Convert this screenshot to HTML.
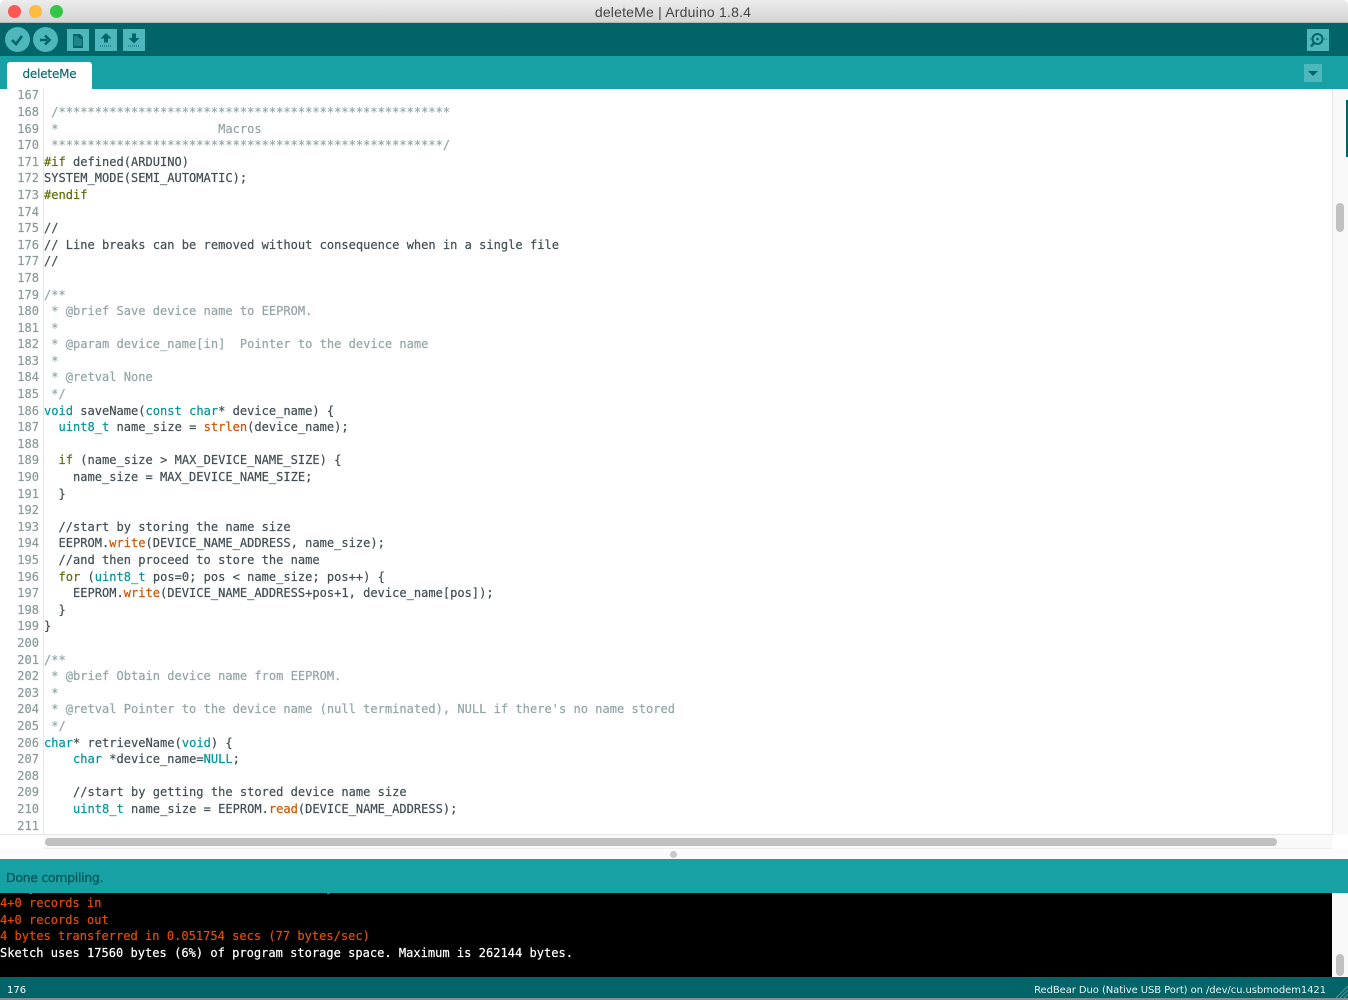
<!DOCTYPE html>
<html><head><meta charset="utf-8"><style>
html,body{margin:0;padding:0;width:1348px;height:1000px;overflow:hidden;background:#fff}
*{box-sizing:border-box}
.a{position:absolute}
#code,#nums,#con{font-family:"DejaVu Sans Mono","Liberation Mono",monospace;font-size:12.05px;line-height:16.6px;white-space:pre;position:absolute;margin:0;-webkit-text-stroke:.2px}
#nums{left:0;width:39px;top:87.4px;text-align:right;color:#8b9a9a}
#code{left:44px;top:87.4px;color:#434f54}
.c{color:#95a5a6}.k{color:#00979d}.f{color:#d35400}.p{color:#5e6d03}
#con{left:0;top:895px;color:#fff}
#con .o{color:#e34c00}
.btn{position:absolute;background:#4db7bb;width:22px;height:22px;top:29px}
.r{position:absolute;border-radius:50%;background:#4db7bb;width:25px;height:25px;top:27px}
</style></head><body>
<div class="a" style="left:0;top:0;width:1348px;height:23px;background:linear-gradient(#ececec,#d4d4d4);border-bottom:1px solid #b5b5b5;border-radius:5px 5px 0 0"></div>
<div class="a" style="left:0;top:3px;width:1346px;text-align:center;font:14px/18px 'Liberation Sans',sans-serif;color:#444;letter-spacing:.2px">deleteMe | Arduino 1.8.4</div>
<div class="a" style="left:8px;top:5px;width:13px;height:13px;border-radius:50%;background:#fc5753"></div>
<div class="a" style="left:29px;top:5px;width:13px;height:13px;border-radius:50%;background:#fdbc40"></div>
<div class="a" style="left:50px;top:5px;width:13px;height:13px;border-radius:50%;background:#33c748"></div>

<div class="a" style="left:0;top:23px;width:1348px;height:33px;background:#006468"></div>
<div class="r" style="left:5px"></div>
<div class="r" style="left:33px"></div>
<div class="btn" style="left:67px"></div>
<div class="btn" style="left:95px"></div>
<div class="btn" style="left:123px"></div>
<div class="btn" style="left:1307px"></div>
<svg class="a" style="left:0;top:23px" width="150" height="33" viewBox="0 23 150 33">
<path d="M12 40l4 4 6-8" fill="none" stroke="#006468" stroke-width="2.6"/>
<path d="M40 40h7M45 35.5l4.5 4.5-4.5 4.5" fill="none" stroke="#006468" stroke-width="2.6"/>
<path d="M73 34h7l3 3v11H73z" fill="#006468"/>
<path d="M75 36v10M77 36v10M79 38v8M81 39v7" stroke="#4db7bb" stroke-width=".8"/>
<path d="M106 33l5.500 5.500h-3.500v4h-4v-4h-3.500z" fill="#006468"/>
<path d="M100 46h12" stroke="#006468" stroke-width="1" stroke-dasharray="1 1"/>
<path d="M134 43.500l5.500-5.500h-3.500v-4.500h-4v4.500h-3.500z" fill="#006468"/>
<path d="M128 46h12" stroke="#006468" stroke-width="1" stroke-dasharray="1 1"/>
</svg>
<svg class="a" style="left:1307px;top:29px" width="22" height="22" viewBox="0 0 22 22">
<circle cx="10.500" cy="10" r="5" fill="none" stroke="#006468" stroke-width="2"/><circle cx="10.500" cy="10" r="1.300" fill="#006468"/>
<path d="M7 14l-3 3.500" stroke="#006468" stroke-width="2.400"/><path d="M3 10h1.500M17 10h3" stroke="#006468" stroke-width="1" stroke-dasharray="1 1"/>
</svg>

<div class="a" style="left:0;top:56px;width:1348px;height:33px;background:#17a1a5"></div>
<div class="a" style="left:7px;top:62px;width:85px;height:27px;background:#fff;border-radius:3px 3px 0 0;text-align:center;font:12px/25px 'DejaVu Sans','Liberation Sans',sans-serif;color:#0b6a6e;letter-spacing:-.2px;-webkit-text-stroke:.15px">deleteMe</div>
<div class="a" style="left:1304px;top:64px;width:18px;height:18px;background:#4db7bb"></div>
<div class="a" style="left:1308px;top:71px;width:0;height:0;border-left:5.500px solid transparent;border-right:5.500px solid transparent;border-top:5px solid #006468"></div>

<div class="a" style="left:43px;top:89px;width:1px;height:746px;background:#e6e6e6"></div>
<pre id="nums">167
168
169
170
171
172
173
174
175
176
177
178
179
180
181
182
183
184
185
186
187
188
189
190
191
192
193
194
195
196
197
198
199
200
201
202
203
204
205
206
207
208
209
210
211</pre>
<pre id="code">

<span class="c"> /******************************************************
 *                      Macros
 ******************************************************/</span>
<span class="p">#if</span> defined(ARDUINO)
SYSTEM_MODE(SEMI_AUTOMATIC);
<span class="p">#endif</span>

//
// Line breaks can be removed without consequence when in a single file
//

<span class="c">/**
 * @brief Save device name to EEPROM.
 *
 * @param device_name[in]  Pointer to the device name
 *
 * @retval None
 */</span>
<span class="k">void</span> saveName(<span class="k">const</span> <span class="k">char</span>* device_name) {
  <span class="k">uint8_t</span> name_size = <span class="f">strlen</span>(device_name);

  <span class="p">if</span> (name_size &gt; MAX_DEVICE_NAME_SIZE) {
    name_size = MAX_DEVICE_NAME_SIZE;
  }

  //start by storing the name size
  EEPROM.<span class="f">write</span>(DEVICE_NAME_ADDRESS, name_size);
  //and then proceed to store the name
  <span class="p">for</span> (<span class="k">uint8_t</span> pos=0; pos &lt; name_size; pos++) {
    EEPROM.<span class="f">write</span>(DEVICE_NAME_ADDRESS+pos+1, device_name[pos]);
  }
}

<span class="c">/**
 * @brief Obtain device name from EEPROM.
 *
 * @retval Pointer to the device name (null terminated), NULL if there's no name stored
 */</span>
<span class="k">char</span>* retrieveName(<span class="k">void</span>) {
    <span class="k">char</span> *device_name=<span class="k">NULL</span>;

    //start by getting the stored device name size
    <span class="k">uint8_t</span> name_size = EEPROM.<span class="f">read</span>(DEVICE_NAME_ADDRESS);
</pre>

<div class="a" style="left:1332px;top:89px;width:16px;height:746px;background:#f9f9f9;border-left:1px solid #e8e8e8"></div>
<div class="a" style="left:1336px;top:203px;width:8px;height:29px;border-radius:4px;background:#c1c1c1"></div>
<div class="a" style="left:1346px;top:100px;width:2px;height:57px;background:#006468"></div>
<div class="a" style="left:0;top:834px;width:1332px;height:1px;background:#e8e8e8"></div>
<div class="a" style="left:44px;top:835px;width:1288px;height:14px;background:#f9f9f9;border-bottom:1px solid #eee"></div>
<div class="a" style="left:45px;top:838px;width:1232px;height:8px;border-radius:4px;background:#c0c0c0"></div>
<div class="a" style="left:0;top:849px;width:1348px;height:10px;background:#fbfbfb"></div>
<div class="a" style="left:670px;top:851px;width:7px;height:7px;border-radius:50%;background:#c8c8c8"></div>

<div class="a" style="left:0;top:893px;width:1332px;height:84px;background:#000;overflow:hidden">
<pre id="con" style="top:2px"><span class="o">4+0 records in
4+0 records out
4 bytes transferred in 0.051754 secs (77 bytes/sec)</span>
Sketch uses 17560 bytes (6%) of program storage space. Maximum is 262144 bytes.</pre>
<div class="a" style="left:29px;top:0;width:3px;height:1px;background:#e34c00"></div>
<div class="a" style="left:327px;top:0;width:3px;height:1px;background:#e34c00"></div>
</div>
<div class="a" style="left:1332px;top:893px;width:16px;height:84px;background:#f9f9f9"></div>
<div class="a" style="left:1336px;top:954px;width:8px;height:22px;border-radius:4px;background:#c1c1c1"></div>

<div class="a" style="left:0;top:859px;width:1348px;height:34px;background:#17a1a5"></div>
<div class="a" style="left:6px;top:869px;font:12.5px/17px 'DejaVu Sans','Liberation Sans',sans-serif;color:#004f52;letter-spacing:-.3px;-webkit-text-stroke:.15px">Done compiling.</div>

<div class="a" style="left:0;top:977px;width:1348px;height:21px;background:#006468"></div>
<div class="a" style="left:0;top:998px;width:1348px;height:2px;background:#8c8c8c"></div>
<div class="a" style="left:7px;top:984px;font:10px/14px 'DejaVu Sans','Liberation Sans',sans-serif;color:#fff">176</div>
<div class="a" style="right:22px;top:984px;font:10px/14px 'DejaVu Sans','Liberation Sans',sans-serif;color:#e8f4f4;letter-spacing:-.08px">RedBear Duo (Native USB Port) on /dev/cu.usbmodem1421</div>
<svg class="a" style="left:1335px;top:985px" width="13" height="13"><path d="M1 13L13 1M5 13l8-8M9 13l4-4" stroke="#4d9396" stroke-width="1"/></svg>
</body></html>
